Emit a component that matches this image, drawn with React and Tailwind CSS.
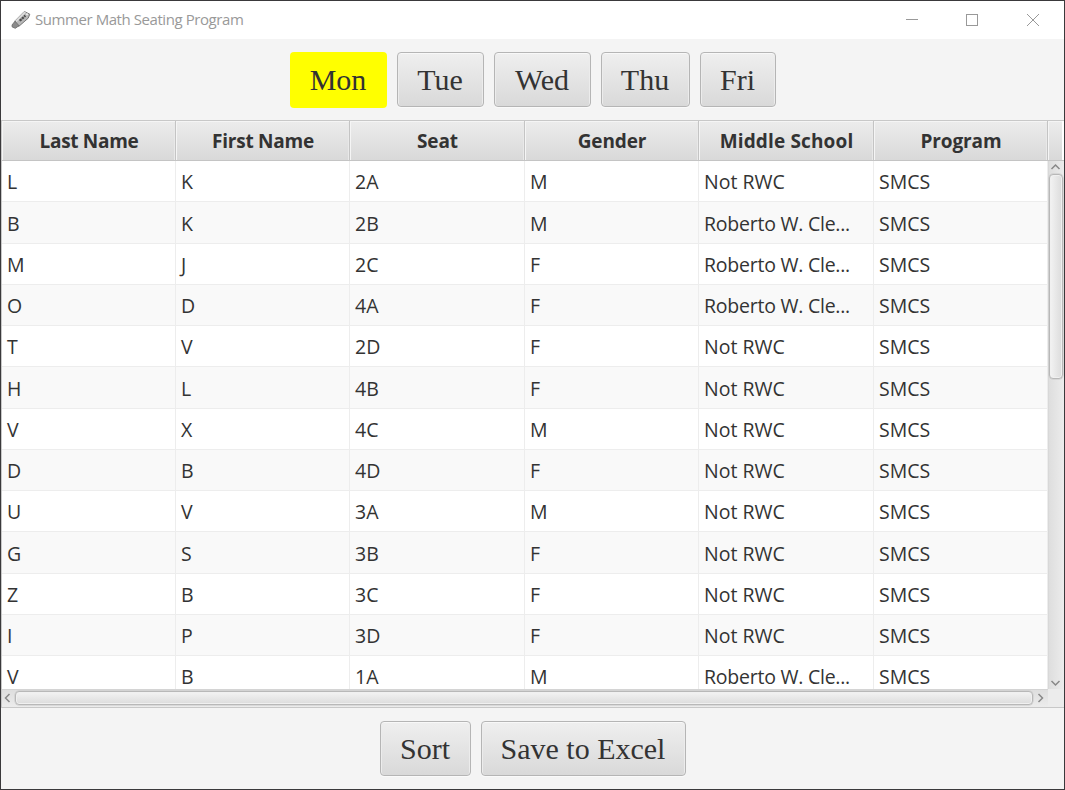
const columns = [
  { name: "Last Name", width: "w-[174px]", tracking: "tracking-[-0.3px]" },
  { name: "First Name", width: "w-[174px]", tracking: "tracking-[-0.25px]" },
  { name: "Seat", width: "w-[175px]", tracking: "tracking-[-0.1px]" },
  { name: "Gender", width: "w-[174px]", tracking: "tracking-[-0.1px]" },
  { name: "Middle School", width: "w-[175px]", tracking: "tracking-[0.15px]" },
  { name: "Program", width: "w-[174px]", tracking: "tracking-[-0.1px]" },
];

const RWC = "Roberto W. Cle...";
const students = [
  ["L", "K", "2A", "M", "Not RWC", "SMCS"],
  ["B", "K", "2B", "M", RWC, "SMCS"],
  ["M", "J", "2C", "F", RWC, "SMCS"],
  ["O", "D", "4A", "F", RWC, "SMCS"],
  ["T", "V", "2D", "F", "Not RWC", "SMCS"],
  ["H", "L", "4B", "F", "Not RWC", "SMCS"],
  ["V", "X", "4C", "M", "Not RWC", "SMCS"],
  ["D", "B", "4D", "F", "Not RWC", "SMCS"],
  ["U", "V", "3A", "M", "Not RWC", "SMCS"],
  ["G", "S", "3B", "F", "Not RWC", "SMCS"],
  ["Z", "B", "3C", "F", "Not RWC", "SMCS"],
  ["I", "P", "3D", "F", "Not RWC", "SMCS"],
  ["V", "B", "1A", "M", RWC, "SMCS"],
];

const headerFill =
  "border-r border-[#c4c4c4] bg-linear-to-b from-[#ececec] to-[#d9d9d9] shadow-[inset_1px_1px_0_#f5f5f5,inset_-1px_0_0_#e9e9e9]";

function Button({ width, children }) {
  return (
    <button
      className={`${width} flex h-[55px] shrink-0 items-center justify-center rounded-[4px] border border-[#b5b5b5] bg-linear-to-b from-[#efefef] to-[#d9d9d9] pt-px pr-px whitespace-nowrap shadow-[inset_0_1px_0_#f8f8f8,inset_1px_0_0_#ececec,inset_-1px_0_0_#ececec,0_1px_0_#fafafa]`}
    >
      {children}
    </button>
  );
}

function TitleBar() {
  return (
    <div className="flex h-[38px] shrink-0 items-center bg-white">
      <svg className="ml-[10px] size-[20px]" viewBox="0 0 20 20">
        <path d="M4.2 10.7 13.3 1.5 18.8 4.2 17.2 8.2 8 16.2 4.7 15Z" fill="#b8b8b8" stroke="#777" strokeWidth="1" />
        <path d="M4.2 10.7 13.3 1.5 15 2.4 5.6 12Z" fill="#ddd" />
        <path d="m1 15 3-3.8 4 4.5L4.3 18.3 1.2 17Z" fill="#8b8b8b" stroke="#666" strokeWidth=".8" />
        <path d="m8.3 10.4 5.8-5.2M9.2 11.2l5.5-5" stroke="#444" strokeWidth="1.1" strokeDasharray="2.3 .7" />
        <circle cx="16" cy="4.2" r="1" fill="#eee" />
      </svg>
      <span className="mb-[2px] ml-[4px] w-[300px] text-[15px] leading-[20px] tracking-[-0.43px] text-[#999]">
        Summer Math Seating Program
      </span>
      <svg className="ml-auto h-[38px] w-[160px]" viewBox="904 1 160 38" fill="none" stroke="#999" shapeRendering="crispEdges">
        <path d="M906 19.5h12" />
        <rect x="966.5" y="14.5" width="11" height="11" />
        <path d="m1027 14 12 12m0-12-12 12" shapeRendering="auto" />
      </svg>
    </div>
  );
}

function Table() {
  return (
    <div className="flex h-[588px] shrink-0 flex-col border-y border-l border-[#c8c8c8] bg-white">
      <div className="flex h-[40px] shrink-0 border-b border-[#c4c4c4] font-bold">
        {columns.map((c) => (
          <div
            key={c.name}
            className={`${c.width} ${c.tracking} ${headerFill} flex shrink-0 items-center justify-center pt-px pl-px`}
          >
            {c.name}
          </div>
        ))}
        <div className="w-[14px] bg-linear-to-b from-[#ececec] to-[#d9d9d9] shadow-[inset_1px_1px_0_#f5f5f5]" />
      </div>
      <div className="flex h-[528px] shrink-0 text-[19.5px]">
        <div className="w-[1046px] shrink-0 overflow-hidden">
          {students.map((row, i) => (
            <div
              key={i}
              className={`flex border-b border-[#ededed] ${i % 4 === 1 ? "h-[42px]" : "h-[41px]"} ${i % 2 ? "bg-[#f9f9f9]" : "bg-white"}`}
            >
              {row.map((value, j) => (
                <div
                  key={j}
                  className={`${columns[j].width} ${value === RWC ? "tracking-[-0.24px]" : ""} flex shrink-0 items-center overflow-hidden border-r border-[#ededed] pt-[2px] pl-[5px] whitespace-nowrap`}
                >
                  {value}
                </div>
              ))}
            </div>
          ))}
        </div>
        <div className="flex w-[16px] flex-col items-start border-l border-[#d8d8d8] bg-linear-to-r from-[#dedede] to-[#ececec]">
          <svg className="h-[13px] w-[14px] shrink-0" viewBox="0 0 14 13" fill="none" stroke="#888" strokeWidth="1.5">
            <path d="m2.5 8 4-4 4 4" />
          </svg>
          <div className="h-[205px] w-[14px] shrink-0 rounded-[4px] border-[1.5px] border-[#b8b8b8] bg-linear-to-r from-[#f3f3f3] to-[#dcdcdc] shadow-[inset_0_0_0_1px_#f0f0f0,0_0_0_0.5px_#c8c8c8]" />
          <div className="flex-1" />
          <svg className="h-[13px] w-[14px] shrink-0" viewBox="0 0 14 13" fill="none" stroke="#888" strokeWidth="1.5">
            <path d="m2.5 5 4 4 4-4" />
          </svg>
        </div>
      </div>
      <div className="flex h-[18px] shrink-0 bg-[#ececec]">
        <div className="flex w-[1046px] items-start border-t border-[#d4d4d4] bg-linear-to-b from-[#dedede] to-[#ececec]">
          <svg className="h-[17px] w-[13px] shrink-0" viewBox="0 0 13 17" fill="none" stroke="#888" strokeWidth="1.5">
            <path d="m7.5 4-4 4 4 4" />
          </svg>
          <div className="mt-px h-[14px] w-[1018px] shrink-0 rounded-[4px] border-[1.5px] border-[#b8b8b8] bg-linear-to-b from-[#f3f3f3] to-[#dcdcdc] shadow-[inset_0_0_0_1px_#f0f0f0,0_0_0_0.5px_#c8c8c8]" />
          <svg className="h-[17px] w-[15px] shrink-0" viewBox="0 0 15 17" fill="none" stroke="#888" strokeWidth="1.5">
            <path d="m5.5 4 4 4-4 4" />
          </svg>
        </div>
      </div>
    </div>
  );
}

export default function App() {
  return (
    <div className="flex h-[790px] w-[1065px] flex-col overflow-hidden border border-[#3a393b] bg-[#f4f4f4] font-['Open_Sans','Noto_Sans',sans-serif] text-[19px] leading-[26px] text-[#333]">
      <TitleBar />
      <div className="flex h-[81px] shrink-0 gap-[10px] pt-[13px] pl-[289px] font-['Liberation_Serif',serif] text-[30px]">
        <button className="flex h-[56px] w-[97px] shrink-0 items-center justify-center rounded-[4px] bg-[#ffff00] pr-px">Mon</button>
        <Button width="w-[87px]">Tue</Button>
        <Button width="w-[97px]">Wed</Button>
        <Button width="w-[89px]">Thu</Button>
        <Button width="w-[76px]">Fri</Button>
      </div>
      <Table />
      <div className="flex gap-[10px] pt-[13px] pl-[379px] font-['Liberation_Serif',serif] text-[30px]">
        <Button width="w-[91px]">Sort</Button>
        <Button width="w-[205px]">Save to Excel</Button>
      </div>
    </div>
  );
}
